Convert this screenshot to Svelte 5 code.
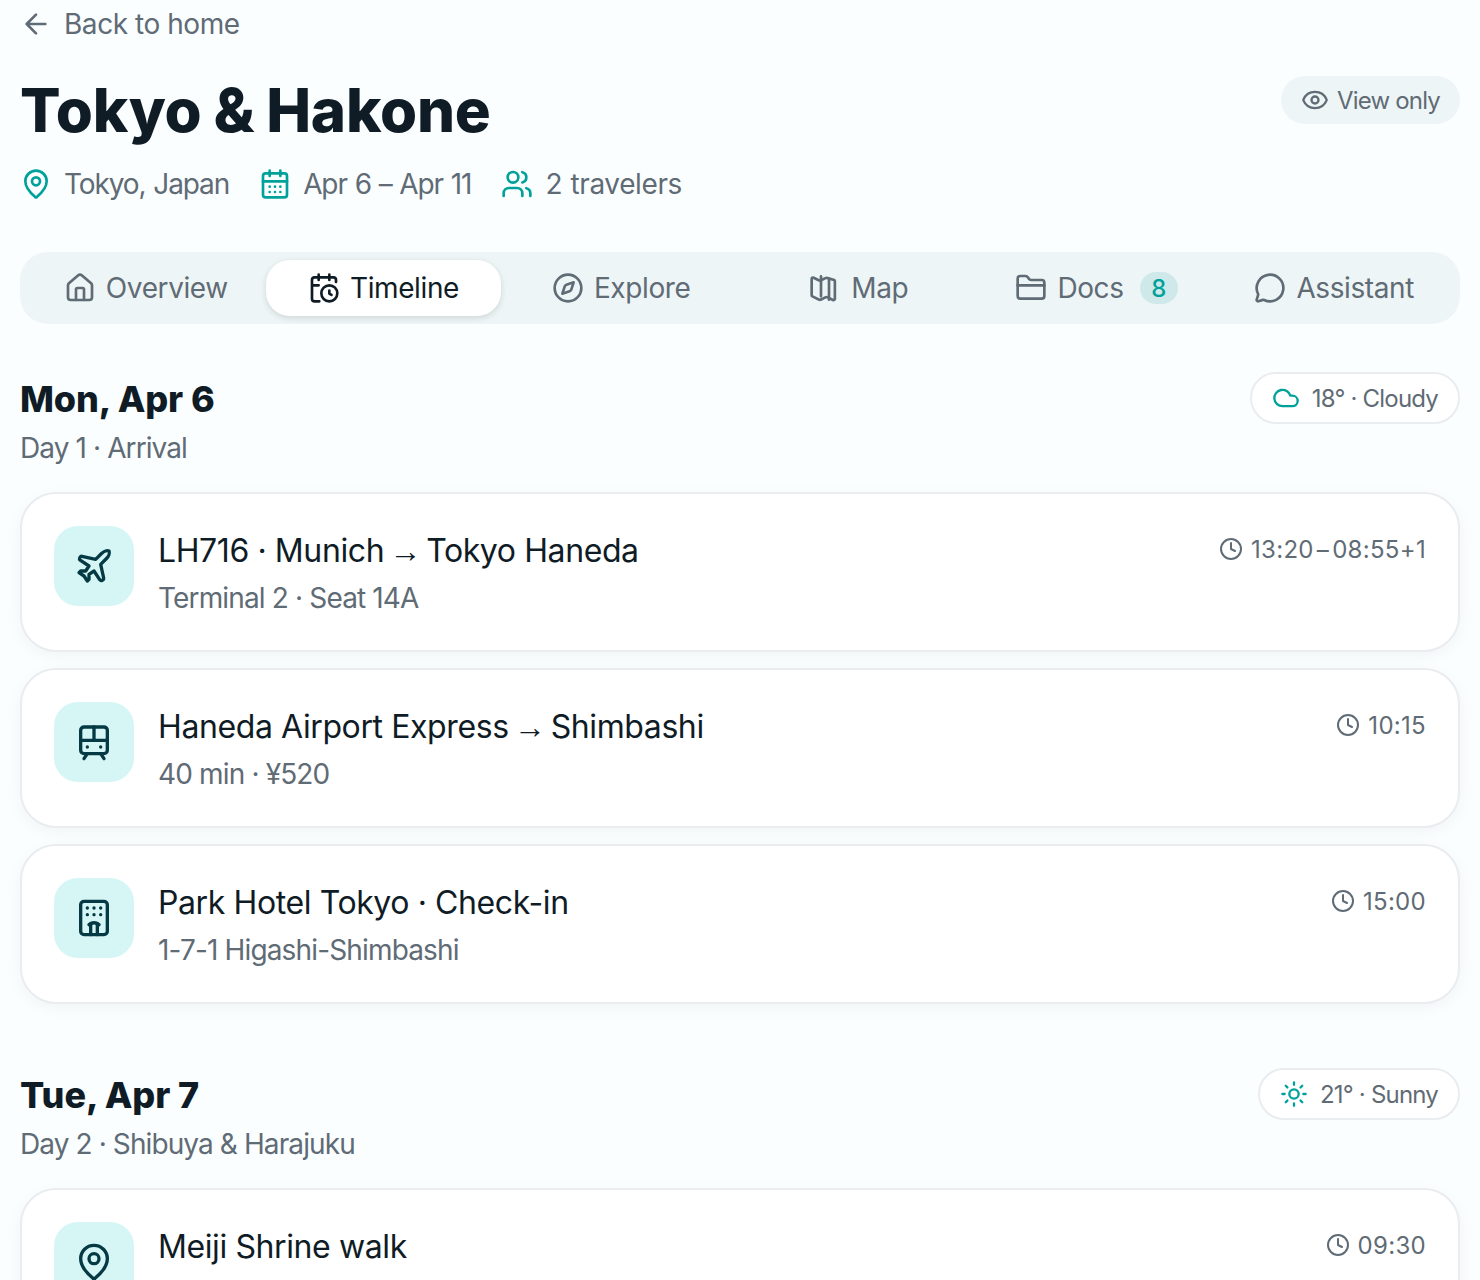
<script>
  const tabs = [
    { id: 'home', label: 'Overview' },
    { id: 'timeline', label: 'Timeline', active: true },
    { id: 'compass', label: 'Explore' },
    { id: 'map', label: 'Map' },
    { id: 'folder', label: 'Docs', count: 8 },
    { id: 'chat', label: 'Assistant' }
  ]

  const days = [
    {
      date: 'Mon, Apr 6',
      sub: 'Day 1 · Arrival',
      weather: '18° · Cloudy',
      icon: 'cloud',
      items: [
        { icon: 'plane', from: 'LH716 · Munich', to: 'Tokyo Haneda', sub: 'Terminal 2 · Seat 14A', time: '13:20 – 08:55+1' },
        { icon: 'train', from: 'Haneda Airport Express', to: 'Shimbashi', sub: '40 min · ¥520', time: '10:15' },
        { icon: 'hotel', from: 'Park Hotel Tokyo · Check-in', sub: '1-7-1 Higashi-Shimbashi', time: '15:00' }
      ]
    },
    {
      date: 'Tue, Apr 7',
      sub: 'Day 2 · Shibuya & Harajuku',
      weather: '21° · Sunny',
      icon: 'sun',
      items: [
        { icon: 'pin', from: 'Meiji Shrine walk', time: '09:30' }
      ]
    }
  ]
</script>

{#snippet icon(name, size = 24)}
  <svg width={size} height={size} viewBox="0 0 24 24" fill="none" stroke="currentColor" stroke-width="2" stroke-linecap="round" stroke-linejoin="round">
    {#if name === 'back'}
      <path d="M19 12H5M12 19l-7-7 7-7" />
    {:else if name === 'pin'}
      <path d="M20 10c0 5-5.500 10.200-7.400 11.800a1 1 0 0 1-1.200 0C9.500 20.200 4 15 4 10a8 8 0 0 1 16 0" /><circle cx="12" cy="10" r="3" />
    {:else if name === 'calendar'}
      <path d="M8 2v4M16 2v4" /><rect x="3" y="4" width="18" height="18" rx="2" /><path d="M3 10h18" />
      <path d="M8 14h.01M12 14h.01M16 14h.01M8 18h.01M12 18h.01M16 18h.01" />
    {:else if name === 'users'}
      <path d="M16 21v-2a4 4 0 0 0-4-4H6a4 4 0 0 0-4 4v2" /><circle cx="9" cy="7" r="4" />
      <path d="M22 21v-2a4 4 0 0 0-3-3.870M16 3.130a4 4 0 0 1 0 7.750" />
    {:else if name === 'eye'}
      <path d="M2.060 12.350a1 1 0 0 1 0-.700 10.750 10.750 0 0 1 19.880 0 1 1 0 0 1 0 .700 10.750 10.750 0 0 1-19.880 0" /><circle cx="12" cy="12" r="3" />
    {:else if name === 'home'}
      <path d="M15 21v-8a1 1 0 0 0-1-1h-4a1 1 0 0 0-1 1v8" />
      <path d="M3 10a2 2 0 0 1 .7-1.500l7-6a2 2 0 0 1 2.600 0l7 6a2 2 0 0 1 .7 1.500v9a2 2 0 0 1-2 2H5a2 2 0 0 1-2-2z" />
    {:else if name === 'timeline'}
      <path d="M16 2v4M8 2v4M21 7.500V6a2 2 0 0 0-2-2H5a2 2 0 0 0-2 2v14a2 2 0 0 0 2 2h3.500M3 10h5" />
      <path d="M16 14v2.200l1.600 1" /><circle cx="16" cy="16" r="6" />
    {:else if name === 'compass'}
      <path d="m16.240 7.760-1.800 5.410a2 2 0 0 1-1.270 1.270l-5.410 1.800 1.800-5.410a2 2 0 0 1 1.270-1.270z" /><circle cx="12" cy="12" r="10" />
    {:else if name === 'map'}
      <path d="M14.100 4.580a2 2 0 0 0-1.800 0L9.100 6.200a2 2 0 0 1-1.800 0L3.450 4.270A1 1 0 0 0 2 5.170v12.200a1 1 0 0 0 .55.900l4.750 2.370a2 2 0 0 0 1.800 0l3.200-1.600a2 2 0 0 1 1.800 0l3.850 1.930a1 1 0 0 0 1.450-.900V6.870a1 1 0 0 0-.55-.900z" />
      <path d="M15 5.760v15M9 3.240v15" />
    {:else if name === 'folder'}
      <path d="M20 20a2 2 0 0 0 2-2V8a2 2 0 0 0-2-2h-7.900a2 2 0 0 1-1.700-.9l-.8-1.200A2 2 0 0 0 7.900 3H4a2 2 0 0 0-2 2v13a2 2 0 0 0 2 2z" /><path d="M2 10h20" />
    {:else if name === 'chat'}
      <path d="M2.990 16.340a2 2 0 0 1 .1 1.050l-1.070 3.290a1 1 0 0 0 1.240 1.240l3.420-1a2 2 0 0 1 .96.100 10 10 0 1 0-4.650-4.680" />
    {:else if name === 'cloud'}
      <path d="M17.500 19H9a7 7 0 1 1 6.710-9h1.790a4.500 4.500 0 1 1 0 9" />
    {:else if name === 'sun'}
      <circle cx="12" cy="12" r="4" />
      <path d="M12 2v2M12 20v2M4.930 4.930l1.410 1.410M17.660 17.660l1.410 1.410M2 12h2M20 12h2M6.340 17.660l-1.410 1.410M19.070 4.930l-1.410 1.410" />
    {:else if name === 'clock'}
      <circle cx="12" cy="12" r="10" /><path d="M12 6v6l4 2" />
    {:else if name === 'plane'}
      <path d="M17.800 19.200 16 11l3.500-3.500C21 6 21.500 4 21 3c-1-.5-3 0-4.500 1.500L13 8 4.800 6.200c-.5-.1-.9.1-1.100.5l-.3.5c-.2.500-.1 1 .3 1.300L9 12l-2 3H4l-1 1 3 2 2 3 1-1v-3l3-2 3.500 5.300c.3.400.8.500 1.300.3l.5-.2c.4-.3.600-.7.500-1.200" />
    {:else if name === 'train'}
      <rect x="4" y="3" width="16" height="16" rx="2" /><path d="M4 11h16M12 3v8M8 19l-2 3M16 19l2 3M8 15h.01M16 15h.01" />
    {:else if name === 'hotel'}
      <rect x="4" y="2" width="16" height="20" rx="2" /><path d="M10 22v-6.570M14 15.430V22" />
      <path d="M15 16a5 5 0 0 0-6 0M8 6h.01M12 6h.01M16 6h.01M8 10h.01M12 10h.01M16 10h.01" />
    {/if}
  </svg>
{/snippet}

<div class="page">
  <a class="back" href="#home">
    {@render icon('back', 32)}
    <span>Back to home</span>
  </a>

  <header class="head">
    <h1>Tokyo &amp; Hakone</h1>
    <div class="view-only">
      {@render icon('eye', 28)}
      <span>View only</span>
    </div>
  </header>

  <div class="meta">
    <div class="meta-item">{@render icon('pin', 32)}<span>Tokyo, Japan</span></div>
    <div class="meta-item">{@render icon('calendar', 32)}<span>Apr 6 – Apr 11</span></div>
    <div class="meta-item wide">{@render icon('users', 32)}<span>2 travelers</span></div>
  </div>

  <nav class="tabs">
    {#each tabs as tab}
      <button class="tab" class:active={tab.active}>
        {@render icon(tab.id, 32)}
        <span>{tab.label}</span>
        {#if tab.count}<span class="count">{tab.count}</span>{/if}
      </button>
    {/each}
  </nav>

  {#each days as day}
    <section class="day">
      <div class="day-head">
        <div>
          <h2>{day.date}</h2>
          <p class="day-sub">{day.sub}</p>
        </div>
        <div class="weather">
          {@render icon(day.icon, 28)}
          <span>{day.weather}</span>
        </div>
      </div>
      <div class="cards">
        {#each day.items as item}
          <article class="card">
            <div class="card-icon">{@render icon(item.icon, 40)}</div>
            <div class="card-body">
              <h3>{item.from}{#if item.to}<span class="arrow">→</span>{item.to}{/if}</h3>
              {#if item.sub}<p>{item.sub}</p>{/if}
            </div>
            <div class="time">
              {@render icon('clock', 24)}
              <span>{item.time}</span>
            </div>
          </article>
        {/each}
      </div>
    </section>
  {/each}
</div>

<style>
  :global(body) {
    margin: 0;
    background: #fbfeff;
    overflow: hidden;
  }

  .page {
    height: 1280px;
    overflow: hidden;
    padding: 0 20px;
    box-sizing: border-box;
    font-family: Inter, "Liberation Sans", sans-serif;
    color: #5f6b75;
  }

  svg {
    flex: none;
    display: block;
  }

  .back {
    display: flex;
    align-items: center;
    gap: 12px;
    height: 48px;
    color: #5f6b75;
    font-size: 28px;
    letter-spacing: -0.45px;
    text-decoration: none;
  }

  .head {
    display: flex;
    justify-content: space-between;
    align-items: flex-start;
    margin-top: 28px;
  }

  h1 {
    margin: 0;
    font-size: 60px;
    line-height: 68px;
    font-weight: 800;
    letter-spacing: -0.2px;
    word-spacing: -1px;
    color: #0f1c26;
  }

  .view-only {
    display: flex;
    align-items: center;
    gap: 8px;
    height: 48px;
    padding: 0 20px;
    border-radius: 24px;
    background: #eef5f6;
    font-size: 24px;
    letter-spacing: -0.8px;
  }

  .meta {
    display: flex;
    gap: 30px;
    margin-top: 20px;
    height: 40px;
    font-size: 28px;
    letter-spacing: -1.1px;
    word-spacing: 1px;
  }

  .meta-item {
    display: flex;
    align-items: center;
    gap: 12px;
  }

  .meta-item.wide {
    letter-spacing: -0.4px;
  }

  .meta-item svg {
    color: #00a19b;
  }

  .tabs {
    display: grid;
    grid-template-columns: repeat(6, 1fr);
    gap: 2px;
    margin-top: 48px;
    padding: 8px;
    height: 72px;
    box-sizing: border-box;
    border-radius: 28px;
    background: #eef5f6;
  }

  .tab {
    display: flex;
    align-items: center;
    justify-content: center;
    gap: 10px;
    border: 0;
    border-radius: 24px;
    background: none;
    color: #5f6b75;
    font-family: inherit;
    font-size: 28px;
    letter-spacing: -0.4px;
    padding: 0;
  }

  .tab.active {
    background: #fff;
    color: #0f1c26;
    box-shadow: 0 2px 6px rgba(15, 28, 38, 0.14);
  }

  .count {
    display: flex;
    align-items: center;
    justify-content: center;
    min-width: 38px;
    height: 32px;
    margin-left: 6px;
    border-radius: 16px;
    background: #cfe9ea;
    color: #00a19b;
    font-size: 24px;
    font-weight: 500;
  }

  .day {
    margin-top: 48px;
  }

  .day + .day {
    margin-top: 64px;
  }

  .day-head {
    display: flex;
    justify-content: space-between;
    align-items: flex-start;
  }

  h2 {
    margin: 0;
    font-size: 36px;
    line-height: 54px;
    font-weight: 800;
    letter-spacing: -0.1px;
    color: #0f1c26;
  }

  .day-sub {
    margin: 2px 0 0;
    font-size: 28px;
    line-height: 40px;
    letter-spacing: -0.9px;
  }

  .weather {
    display: flex;
    align-items: center;
    gap: 12px;
    height: 52px;
    padding: 0 20px;
    box-sizing: border-box;
    border: 2px solid #e9edef;
    border-radius: 26px;
    background: #fff;
    font-size: 24px;
    letter-spacing: -0.8px;
  }

  .weather svg {
    color: #00a19b;
  }

  .cards {
    display: flex;
    flex-direction: column;
    gap: 16px;
    margin-top: 24px;
  }

  .card {
    display: flex;
    align-items: flex-start;
    gap: 24px;
    height: 160px;
    padding: 32px;
    box-sizing: border-box;
    border: 2px solid #e9edef;
    border-radius: 36px;
    background: #fff;
    box-shadow: 0 4px 16px rgba(15, 28, 38, 0.04);
  }

  .card-icon {
    display: flex;
    align-items: center;
    justify-content: center;
    width: 80px;
    height: 80px;
    border-radius: 24px;
    background: #d6f5f5;
    color: #053a44;
  }

  .card-body {
    flex: 1;
  }

  h3 {
    margin: 0;
    font-size: 32px;
    line-height: 50px;
    font-weight: 420;
    letter-spacing: -0.4px;
    color: #0f1c26;
  }

  .arrow {
    margin: 0 5px;
    font-family: "Liberation Sans", sans-serif;
    letter-spacing: 0;
  }

  .card-body p {
    margin: 2px 0 0;
    font-size: 28px;
    line-height: 40px;
    letter-spacing: -0.85px;
  }

  .time {
    display: flex;
    align-items: center;
    gap: 8px;
    height: 46px;
    font-size: 24px;
    letter-spacing: 0.3px;
    word-spacing: -4px;
  }
</style>
